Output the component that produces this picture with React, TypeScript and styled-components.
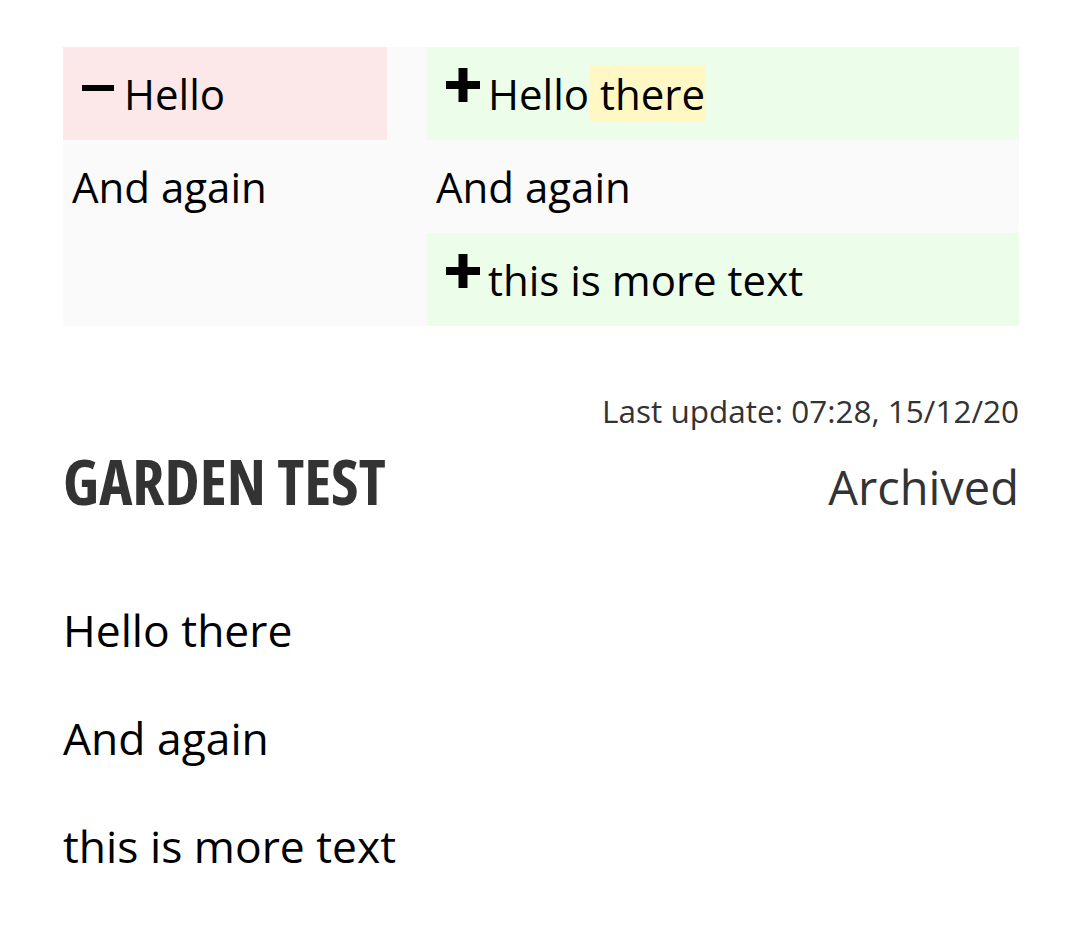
import React from "react";
import styled, { createGlobalStyle } from "styled-components";

const Global = createGlobalStyle`
  html, body { margin: 0; padding: 0; background: #ffffff; }
  body { font-family: "Open Sans", "Noto Sans", sans-serif; color: #000; }
`;

const Page = styled.main`
  padding: 47px 61px 40px 63px;
`;

const DiffTable = styled.div`
  display: grid;
  grid-template-columns: 324px 1fr;
  column-gap: 40px;
  background: #fafafa;
`;

const Cell = styled.div<{ $kind?: "added" | "removed" }>`
  padding: 15px 10px 15px 9px;
  font-size: 42px;
  line-height: 63px;
  color: #000;
  background: ${(p) =>
    p.$kind === "added" ? "#ecfdea" : p.$kind === "removed" ? "#fce8e8" : "transparent"};
  white-space: nowrap;
`;

const Marker = styled.span`
  display: inline-block;
  width: 52px;
  padding-left: 10px;
  box-sizing: border-box;
`;

const MarkSvg = styled.svg<{ $lift: number }>`
  vertical-align: ${(p) => p.$lift}px;
  display: inline-block;
`;

const Highlight = styled.span`
  background: #fff8c5;
`;

const Meta = styled.div`
  margin-top: 63px;
  text-align: right;
  font-size: 31.5px;
  line-height: 44px;
  color: #333;
`;

const TitleRow = styled.div`
  display: flex;
  align-items: baseline;
  justify-content: space-between;
  margin-top: 8px;
`;

const Title = styled.h1`
  margin: 0;
  font-size: 63px;
  line-height: 80px;
  font-weight: 700;
  font-stretch: 75%;
  color: #333;
`;

const Status = styled.div`
  font-size: 47px;
  line-height: 60px;
  color: #333;
`;

const Body = styled.div`
  margin-top: 78px;
`;

const Para = styled.p`
  margin: 0 0 45px;
  font-size: 44.4px;
  line-height: 63px;
  color: #000;
`;

const Plus = () => (
  <Marker>
    <MarkSvg $lift={8} width="34" height="34" viewBox="0 0 34 34">
      <rect x="0" y="13" width="34" height="8" fill="#000" />
      <rect x="12.5" y="0" width="9" height="34" fill="#000" />
    </MarkSvg>
  </Marker>
);

const Minus = () => (
  <Marker>
    <MarkSvg $lift={19} width="32" height="6" viewBox="0 0 32 6">
      <rect x="0" y="0" width="32" height="6" fill="#000" />
    </MarkSvg>
  </Marker>
);

export default function App() {
  return (
    <>
      <Global />
      <Page>
        <DiffTable>
          <Cell $kind="removed">
            <Minus />
            Hello
          </Cell>
          <Cell $kind="added">
            <Plus />
            Hello<Highlight> there</Highlight>
          </Cell>
          <Cell>And again</Cell>
          <Cell>And again</Cell>
          <Cell />
          <Cell $kind="added">
            <Plus />
            this is more text
          </Cell>
        </DiffTable>
        <Meta>Last update: 07:28, 15/12/20</Meta>
        <TitleRow>
          <Title>GARDEN TEST</Title>
          <Status>Archived</Status>
        </TitleRow>
        <Body>
          <Para>Hello there</Para>
          <Para>And again</Para>
          <Para>this is more text</Para>
        </Body>
      </Page>
    </>
  );
}
